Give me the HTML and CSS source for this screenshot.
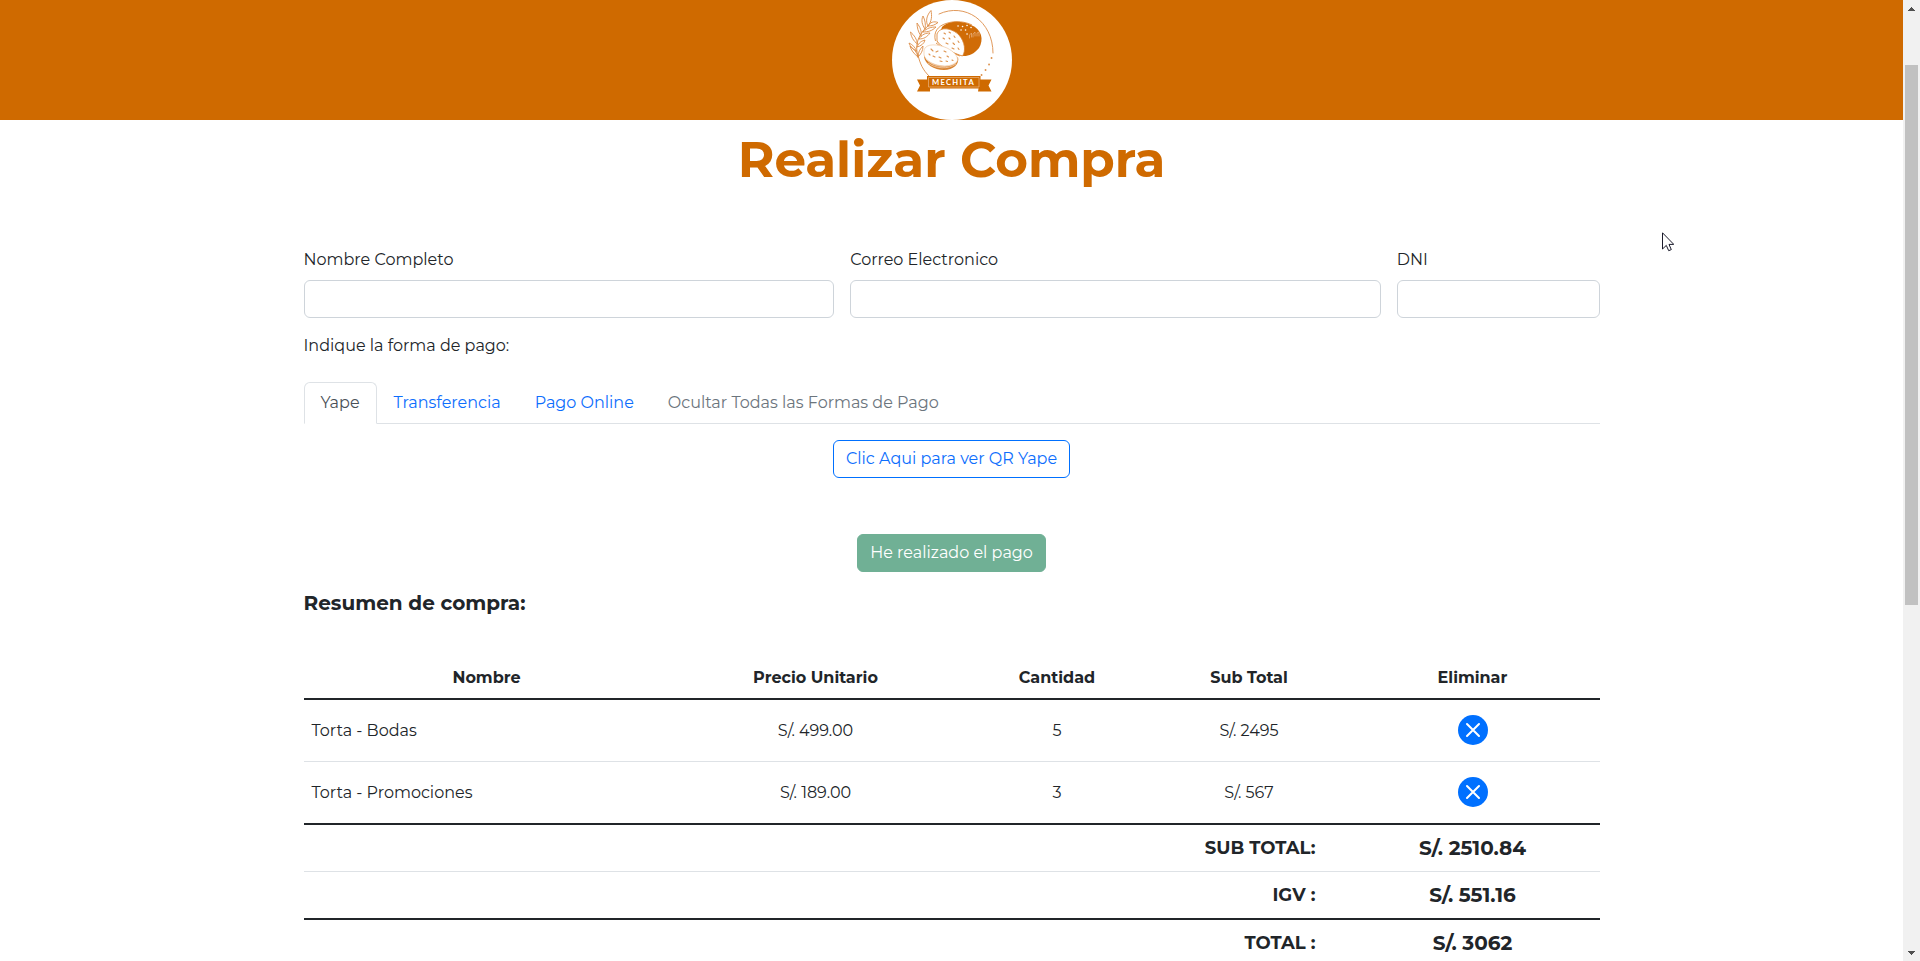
FILE: index.html
```html
<!DOCTYPE html>
<html lang="es">
<head>
<meta charset="utf-8">
<title>Realizar Compra</title>
<link rel="stylesheet" href="styles.css">
</head>
<body>
<div class="viewport">
  <div class="page">
    <header class="header">
      <svg class="logo" viewBox="0 0 120 120">
        <circle cx="60" cy="60" r="60" fill="#fff"/>
        <g fill="none" stroke="#dc8d48" stroke-width=".9" stroke-linecap="round">
          <path d="M47 14C73 2 101 21 101 53"/>
          <path d="M26 55C28 64 31 70 37 76"/>
          <path d="M26 56C22 45 27 33 36 26"/>
          <path d="M36 26C33 21 35 15 39 10.500C40 16 40 21 36 26M33 29C30 25 29 20 31 16C33 20 34 24 33 29M29 36C26 32 25 27 25 23C28 27 30 31 29 36M25.500 44C21 41 19 36 18.500 32C22 35 25 39 25.500 44M24.500 51C20 49 18 46 17 43C21 45 23 47 24.500 51M36 26C38 22 42 21 46 22.500C43 25 40 26 36 26M31 32C35 28 39 27 44 27C40 31 36 32 31 32M27 39C30 34 34 33 38 33C35 37 32 39 27 39M25 47C27 42 30 41 33 40C32 44 29 46 25 47M26 57C22 54 19 50 18 46C22 49 25 52 26 57M26 57C26 52 28 49 31 46C31 51 29 54 26 57"/>
        </g>
        <path d="M50 27C56 21 69 20 79 25C90 29 92 40 87 48C82 54 77 56 72 56C64 55 48 47 45 41Z" fill="#d06c07"/>
        <path d="M45 34C48 26 60 28 67 35C73 42 74 51 70.500 56C63 54 47 46 45 41Z" fill="#fff" stroke="#d97f2b" stroke-width=".8"/>
        <path d="M43.500 41C41 32 46 26 54 23.500C64 20 74 22 80 25M44 43C51 49 60 53 68 56" fill="none" stroke="#d97f2b" stroke-width=".8"/>
        <path d="M33 54C36 64 54 69 66 57C68 64 61 70 52 70C42 70 33 64 32 57Z" fill="#d88433"/>
        <path d="M32 50C34 43 46 44 55 48C65 53 69 61 62 64C53 69 34 64 32 55Z" fill="#fff" stroke="#f0cba8" stroke-width=".7"/>
        <g fill="none" stroke="#dd934f" stroke-width="1.100" stroke-linecap="round">
          <path d="M52 33l1.500 1M57 32l1.500 1M62 36l1 1.500M51 38l1.500 1M57 38l1 1M66 41l1 1.500M54 43l2 1M61 43l1.500 1.500M66 48l1 1.500M60 48l2 1M39 49l2 2M44 52l2-1M52 51l2 1M41 56l2 1M47 57l2 1M55 56l1.500 1M60 60l1 .5M48 61l2 .5M54 61l1.500.5M37 54l1 1"/>
          <path d="M66 26l.1 0M70.500 26.500l.1 0M75 25.500l.1 0M79 27.500l.1 0M73.500 30l.1 0M75 34l.1 0M69 30l.1 0" stroke="#fff" stroke-width="1.500"/>
          <path d="M77.500 38v-3l2-2v4M81 37v-3l2-2v4M85 36v-3l2-1v4" stroke="#e9b381" stroke-width=".7"/>
          <path d="M99.500 58l.1 0M97 64.500l.1 0M93.500 70l.1 0M89.500 75l.1 0" stroke-width="1.800"/>
        </g>
        <path d="M34 59C42 68 56 69 65 61M36 63C44 69 56 69.500 64 64" fill="none" stroke="#fbe9d8" stroke-width=".6"/>
        <path d="M25 79.500H38V91.500H25L28 85.500ZM88 79.500H99.500L96.500 85.500L99.500 91.500H86Z" fill="#cf6a00"/>
        <path d="M35 76H88.500V88.500H35Z" fill="#cf6a00"/>
        <path d="M36.500 77.500H87V87H36.500Z" fill="none" stroke="#edc096" stroke-width=".6"/>
        <text x="61.500" y="85.200" class="logo-name">MECHITA</text>
      </svg>
    </header>

    <main class="container">
      <h1 class="title">Realizar Compra</h1>

      <form class="fields">
        <label class="field">Nombre Completo<input type="text" class="input"></label>
        <label class="field">Correo Electronico<input type="text" class="input"></label>
        <label class="field">DNI<input type="text" class="input"></label>
      </form>

      <p class="hint">Indique la forma de pago:</p>
      <nav class="tabs">
        <a class="tab tab-active">Yape</a>
        <a class="tab">Transferencia</a>
        <a class="tab">Pago Online</a>
        <a class="tab tab-muted">Ocultar Todas las Formas de Pago</a>
      </nav>

      <div class="actions">
        <button class="btn btn-outline">Clic Aqui para ver QR Yape</button>
        <button class="btn btn-success">He realizado el pago</button>
      </div>

      <h2 class="subtitle">Resumen de compra:</h2>
      <table class="table">
        <colgroup><col class="c1"><col class="c2"><col class="c3"><col class="c4"><col class="c5"></colgroup>
        <thead>
          <tr><th>Nombre</th><th>Precio Unitario</th><th>Cantidad</th><th>Sub Total</th><th>Eliminar</th></tr>
        </thead>
        <tbody>
          <tr class="item">
            <td class="name">Torta - Bodas</td><td>S/. 499.00</td><td>5</td><td>S/. 2495</td>
            <td><svg class="remove" viewBox="0 0 30 30"><circle cx="15" cy="15" r="15"/><path d="M9 9L21 21M21 9L9 21"/></svg></td>
          </tr>
          <tr class="item">
            <td class="name">Torta - Promociones</td><td>S/. 189.00</td><td>3</td><td>S/. 567</td>
            <td><svg class="remove" viewBox="0 0 30 30"><circle cx="15" cy="15" r="15"/><path d="M9 9L21 21M21 9L9 21"/></svg></td>
          </tr>
        </tbody>
        <tfoot>
          <tr class="sum"><td colspan="4" class="sum-label">SUB TOTAL:</td><td class="sum-value">S/. 2510.84</td></tr>
          <tr class="sum"><td colspan="4" class="sum-label">IGV :</td><td class="sum-value">S/. 551.16</td></tr>
          <tr class="sum"><td colspan="4" class="sum-label">TOTAL :</td><td class="sum-value">S/. 3062</td></tr>
        </tfoot>
      </table>
    </main>
  </div>

  <aside class="scrollbar">
    <svg class="arrow" viewBox="0 0 7 4" shape-rendering="crispEdges"><path d="M3 0h1v1h1v1h1v1h1v1H0V3h1V2h1V1h1z"/></svg>
    <div class="track"><div class="thumb"></div></div>
    <svg class="arrow" viewBox="0 0 7 4" shape-rendering="crispEdges"><path d="M0 0h7v1H6v1H5v1H4v1H3V3H2V2H1V1H0z"/></svg>
  </aside>

  <svg class="cursor" viewBox="0 0 12 20"><path d="M.5.800V17L4.300 13.400L6.700 18.700L9.300 17.600L7 12.400H11.800Z"/></svg>
</div>
</body>
</html>
```

FILE: styles.css
```css
* { box-sizing: border-box; }

body {
  margin: 0;
  background: #fff;
  color: #212529;
  font: 400 16px/24px Montserrat, "Open Sans", sans-serif;
}

.viewport {
  position: relative;
  display: flex;
  height: 961px;
  overflow: hidden;
}

.page { flex: 1; }

.header {
  display: flex;
  justify-content: center;
  height: 120px;
  background: #cf6a00;
}

.logo { width: 120px; height: 120px; }

.logo-name {
  fill: #fff;
  font: 700 7.6px Lato, sans-serif;
  letter-spacing: 1.3px;
  text-anchor: middle;
}

.container {
  width: 1296px;
  margin: 0 auto;
  padding-top: 10px;
}

.title {
  margin: 0 0 58px;
  color: #cf6a00;
  font-size: 50px;
  font-weight: 700;
  line-height: 60px;
  text-align: center;
}

.fields {
  display: grid;
  grid-template-columns: 530.67px 530.67px 1fr;
  gap: 16px;
}

.field { display: flex; flex-direction: column; gap: 8px; }

.input {
  width: 100%;
  height: 38px;
  border: 1px solid #ced4da;
  border-radius: 6px;
  background: #fff;
}

.hint { margin: 16px 0 24px; }

.tabs { display: flex; border-bottom: 1px solid #dee2e6; }

.tab {
  margin-bottom: -1px;
  padding: 8px 16px;
  border: 1px solid transparent;
  border-radius: 6px 6px 0 0;
  color: #0d6efd;
}

.tab-active {
  border-color: #dee2e6 #dee2e6 #fff;
  background: #fff;
  color: #495057;
}

.tab-muted { color: #6c757d; }

.actions {
  display: flex;
  flex-direction: column;
  align-items: center;
  gap: 56px;
  padding: 16px 0;
}

.btn {
  height: 38px;
  padding: 6px 12px;
  border: 1px solid;
  border-radius: 6px;
  font: inherit;
}

.btn-outline { border-color: #0070ff; background: #fff; color: #0d6efd; }
.btn-success { border-color: #70b095; background: #70b095; color: #fff; }

.subtitle {
  margin: 3px 0 43px;
  font-size: 20px;
  font-weight: 700;
  line-height: 24px;
}

.table {
  width: 1296px;
  border-collapse: separate;
  border-spacing: 0;
  table-layout: fixed;
}

.c1 { width: 366px; }
.c2 { width: 292px; }
.c3 { width: 191px; }
.c4 { width: 193px; }
.c5 { width: 254px; }

.table th { height: 42px; padding: 8px; border-bottom: 2px solid #212529; font-weight: 700; }
.table td { padding: 0 8px; border-bottom: 1px solid #dee2e6; text-align: center; }
.table .item td { height: 62px; }
.table .item:last-child td { height: 63px; border-bottom: 2px solid #212529; }
.table .name { text-align: left; }

.remove { display: block; width: 30px; height: 30px; margin: 0 auto 1px; }
.remove circle { fill: #0070ff; }
.remove path { stroke: #fff; stroke-width: 2; stroke-linecap: round; }

.table .sum td { height: 47px; font-weight: 700; }
.table .sum:nth-child(2) td { height: 48px; border-bottom: 2px solid #212529; }
.table .sum-label { padding-right: 30px; font-size: 18px; text-align: right; }
.table .sum-value { font-size: 20px; }

.scrollbar {
  display: flex;
  flex-direction: column;
  align-items: center;
  width: 17px;
  padding: 7px 0 6px;
  background: #f1f1f1;
}

.arrow { width: 7px; height: 4px; fill: #505050; }
.track { flex: 1; width: 13px; padding-top: 54px; }
.thumb { height: 540px; background: #c1c1c1; }

.cursor {
  position: absolute;
  left: 1662px;
  top: 232px;
  width: 12px;
  height: 20px;
  fill: #fff;
  stroke: #1b1b2b;
}
```
